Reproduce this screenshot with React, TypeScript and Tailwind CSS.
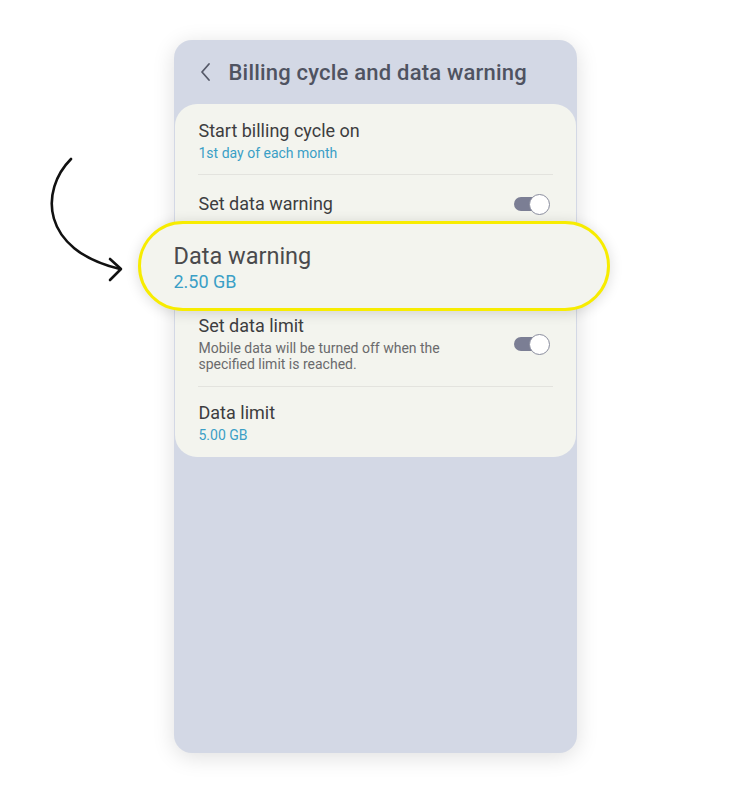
import React from "react";

function Toggle() {
  return (
    <div className="relative w-[36px] h-[20px] flex items-center">
      <div className="w-[34px] h-[14px] rounded-full bg-[#7b7e94]" />
      <div className="absolute right-0 top-0 w-[21px] h-[21px] rounded-full bg-white border-[1.5px] border-[#8a8d9e]" />
    </div>
  );
}

export default function App() {
  return (
    <div
      className="relative w-full h-[794px] bg-white overflow-hidden"
      style={{ fontFamily: "Roboto, 'Noto Sans', sans-serif" }}
    >
      {/* curved pointer arrow */}
      <svg
        className="absolute left-[40px] top-[150px]"
        width="100"
        height="140"
        viewBox="40 150 100 140"
        fill="none"
        stroke="#111"
        strokeWidth="2.6"
        strokeLinecap="round"
        strokeLinejoin="round"
      >
        <path d="M71 159 C 40 190, 40 250, 120 269" />
        <path d="M110 259 L121 269 L110 280" />
      </svg>

      <div className="mx-auto mt-[40px] w-[403px] h-[713px] rounded-[18px] bg-[#d3d8e5] shadow-[0_4px_22px_rgba(0,0,0,0.13)] flex flex-col">
        {/* header */}
        <div className="h-[64px] flex items-center pl-[25px] gap-[16px]">
          <svg width="14" height="20" viewBox="0 0 14 20" fill="none" stroke="#555968" strokeWidth="1.8" strokeLinecap="round" strokeLinejoin="round">
            <path d="M10 2 L3 10 L10 18" />
          </svg>
          <span className="text-[22px] font-medium text-[#4f5361] tracking-[0.2px]">
            Billing cycle and data warning
          </span>
        </div>

        {/* settings card */}
        <div className="mx-px rounded-[22px] bg-[#f3f4ee] flex flex-col">
          <div className="px-[24px] pt-[15px] pb-[11px]">
            <div className="text-[18px] leading-[24px] text-[#3d3d3f]">Start billing cycle on</div>
            <div className="text-[14px] leading-[20px] text-[#3a9fc6]">1st day of each month</div>
          </div>
          <div className="mx-[23px] h-px bg-[#e3e3de]" />

          <div className="pl-[24px] pr-[26px] pt-[17px] flex items-center justify-between">
            <div className="text-[18px] leading-[24px] text-[#3d3d3f]">Set data warning</div>
            <Toggle />
          </div>

          {/* highlighted row */}
          <div className="mt-[5px] -ml-[37px] -mr-[34px] h-[90px] rounded-full border-[3px] border-[#f7ec00] bg-[#f3f4ee] shadow-[0_2px_14px_rgba(0,0,0,0.14)] pl-[33px] pt-[17px]">
            <div className="text-[23.5px] leading-[30px] text-[#4a4a4c]">Data warning</div>
            <div className="text-[18px] leading-[22px] text-[#3a9fc6]">2.50 GB</div>
          </div>

          <div className="pl-[24px] pr-[26px] mt-[3px] pb-[14px] flex items-start justify-between">
            <div>
              <div className="text-[18px] leading-[24px] text-[#3d3d3f]">Set data limit</div>
              <div className="text-[14px] leading-[16px] text-[#6a6a6c] w-[270px] mt-[2px]">
                Mobile data will be turned off when the specified limit is reached.
              </div>
            </div>
            <div className="mt-[20px]">
              <Toggle />
            </div>
          </div>
          <div className="mx-[23px] h-px bg-[#e3e3de]" />

          <div className="px-[24px] pt-[14px] pb-[12px]">
            <div className="text-[18px] leading-[24px] text-[#3d3d3f]">Data limit</div>
            <div className="text-[14px] leading-[20px] text-[#3a9fc6]">5.00 GB</div>
          </div>
        </div>
      </div>
    </div>
  );
}
